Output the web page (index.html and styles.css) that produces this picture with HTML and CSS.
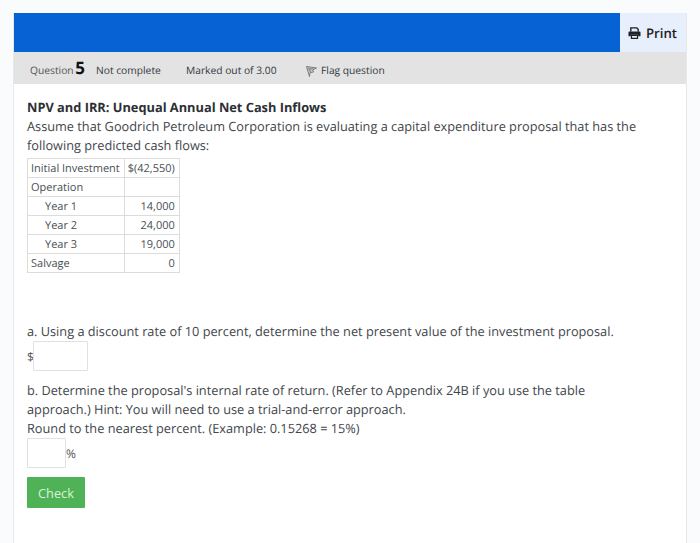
FILE: index.html
```html
<!DOCTYPE html>
<html lang="en">
<head>
<meta charset="utf-8">
<title>Question 5</title>
<link rel="stylesheet" href="styles.css">
</head>
<body>
<main class="panel">
  <header class="topbar">
    <div class="blue"></div>
    <div class="print">
      <svg class="print-icon" viewBox="0 0 14 13" width="13" height="12" aria-hidden="true">
        <path d="M3 5V1h6.500L11 2.500V5" fill="none" stroke="#1d2125" stroke-width="1.500"/>
        <path d="M1.500 5h11a1 1 0 0 1 1 1v4H11V8.300H3V10H.5V6a1 1 0 0 1 1-1z" fill="#1d2125"/>
        <path d="M3.700 9h6.600v3.300H3.700z" fill="none" stroke="#1d2125" stroke-width="1.300"/>
      </svg>
      <span>Print</span>
    </div>
  </header>
  <div class="infobar">
    <span class="qno">Question <b>5</b></span>
    <span class="state">Not complete</span>
    <span class="grade">Marked out of 3.00</span>
    <span class="flag">
      <svg class="flag-icon" viewBox="0 0 11 12" width="11" height="12" aria-hidden="true">
        <path d="M.5 1.500 10.500 3 6.500 5l1 2L4 7.500 3.500 11.500z" fill="none" stroke="#777" stroke-width="1"/>
        <path d="M1 2l7.500 1.200L5 5l.8 1.500L3.500 7z" fill="#999"/>
      </svg>Flag question
    </span>
  </div>
  <section class="content">
    <h1 class="title">NPV and IRR: Unequal Annual Net Cash Inflows</h1>
    <p class="para">Assume that Goodrich Petroleum Corporation is evaluating a capital expenditure proposal that has the following predicted cash flows:</p>
    <table class="flows">
      <tr><td>Initial Investment</td><td class="num">$(42,550)</td></tr>
      <tr><td>Operation</td><td></td></tr>
      <tr><td class="ind">Year 1</td><td class="num">14,000</td></tr>
      <tr><td class="ind">Year 2</td><td class="num">24,000</td></tr>
      <tr><td class="ind">Year 3</td><td class="num">19,000</td></tr>
      <tr><td>Salvage</td><td class="num">0</td></tr>
    </table>
    <p class="para part-a">a. Using a discount rate of 10 percent, determine the net present value of the investment proposal.</p>
    <div class="answer answer-a">
      <span class="unit">$</span><input class="box box-a" type="text" aria-label="Net present value">
    </div>
    <p class="para part-b">b. Determine the proposal's internal rate of return. (Refer to Appendix 24B if you use the table approach.) Hint: You will need to use a trial-and-error approach.<br>Round to the nearest percent. (Example: 0.15268 = 15%)</p>
    <div class="answer">
      <input class="box box-b" type="text" aria-label="Internal rate of return"><span class="unit">%</span>
    </div>
    <button class="check" type="button">Check</button>
  </section>
</main>
</body>
</html>
```
FILE: styles.css
```css
* { box-sizing: border-box; }
html, body { margin: 0; height: 100%; overflow: hidden; }
body {
  background: #fafbfc;
  padding: 13px 13px 0 14px;
  font-family: "Open Sans", sans-serif;
  color: #41464b;
  font-size: 12.75px;
  text-rendering: geometricPrecision;
}
.panel {
  background: #fff;
  border-right: 1px solid #e8e8e8;
  box-shadow: -1px 0 0 #e8e8e8;
  height: 100%;
}
.topbar { display: flex; height: 39px; }
.blue { flex: 1; background: #0763d4; }
.print {
  width: 66px;
  background: #e6effb;
  display: flex;
  align-items: center;
  gap: 5px;
  padding-left: 8px;
  font-weight: 600;
  font-size: 13.2px;
  color: #1d2125;
}
.print-icon { flex: none; }
.infobar {
  height: 32px;
  background: #e3e3e3;
  display: flex;
  align-items: baseline;
  padding: 7px 0 0 16px;
  font-size: 10.25px;
  color: #33383d;
}
.qno { color: #555; width: 66px; white-space: nowrap; }
.qno b { font-size: 17px; color: #111; font-weight: 700; line-height: 1; margin-left: -1px; }
.state { width: 90px; }
.grade { width: 120px; }
.flag { display: block; }
.flag-icon { vertical-align: -3px; margin-right: 4px; }
.content { padding: 14px 41px 0 13px; }
.title { margin: 0; font-size: 12.8px; line-height: 19px; font-weight: 700; color: #2b2f33; }
.para { margin: 0; line-height: 19px; }
.flows {
  border-collapse: collapse;
  margin-top: 3px;
  font-size: 11px;
  color: #4a4f54;
}
.flows td {
  border: 1px solid #dcdcdc;
  height: 19px;
  padding: 0 4px 0 3px;
  line-height: 17px;
}
.flows .ind { padding-left: 17px; }
.flows .num { text-align: right; }
.part-a { margin-top: 49px; }
.answer { display: flex; align-items: center; height: 30px; }
.answer-a { margin-top: 0; }
.unit { font-size: 12px; color: #555; }
.box { border: 1px solid #dfe2e5; background: #fff; padding: 0; margin: 0; outline: none; border-radius: 1px; height: 30px; }
.box-a { width: 55px; margin-left: -1px; }
.box-b { width: 39px; }
.part-b { margin-top: 10px; }
.check {
  display: block;
  margin-top: 9px;
  width: 58px;
  height: 31px;
  border: 0;
  border-radius: 1px;
  background: #4fb257;
  color: #d9f2da;
  font: 12.75px "Open Sans", sans-serif;
  padding: 0;
}
```
